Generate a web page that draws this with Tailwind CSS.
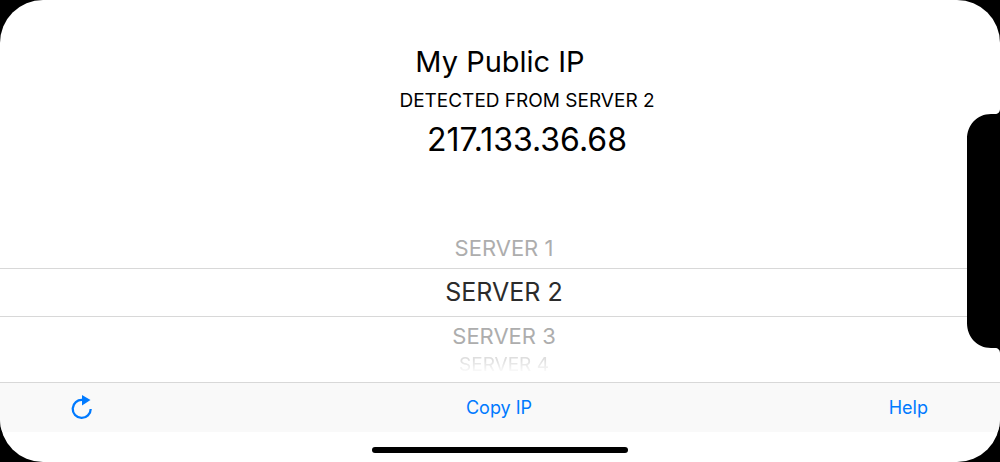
<!DOCTYPE html>
<html lang="en">
<head>
  <meta charset="UTF-8" />
  <meta name="viewport" content="width=device-width, initial-scale=1.0" />
  <title>My Public IP</title>
  <script src="https://cdn.jsdelivr.net/npm/@tailwindcss/browser@4"></script>
</head>
<body class="bg-black font-['Inter',sans-serif]">
  <div class="relative flex min-h-screen flex-col overflow-hidden rounded-[43px] bg-white">
    <header class="flex flex-col items-center pt-10 text-black">
      <h1 class="text-[29px] leading-[44px]">My Public IP</h1>
      <p class="pl-[54px] text-[19px] leading-[34px]">DETECTED FROM SERVER 2</p>
      <p id="ip" class="pl-[54px] text-[32px] leading-[44px]">217.133.36.68</p>
    </header>

    <!-- server picker -->
    <div role="radiogroup" aria-label="Server" class="mt-auto flex h-[153px] flex-col text-center text-[22px] text-[#adadad]">
      <label class="flex h-[39px] items-center justify-center pl-2">
        <input type="radio" name="server" value="1" class="appearance-none" />SERVER 1
      </label>
      <label class="flex h-[49px] items-center justify-center border-y border-[#d8d8d8] pl-2 text-[25px] text-[#2b2b2b]">
        <input type="radio" name="server" value="2" class="appearance-none" checked />SERVER 2
      </label>
      <label class="flex h-[39px] items-center justify-center pl-2">
        <input type="radio" name="server" value="3" class="appearance-none" />SERVER 3
      </label>
      <label class="flex h-[18px] items-center justify-center pl-2 text-[19px] text-[#dedede] mask-b-from-20%">
        <input type="radio" name="server" value="4" class="appearance-none" />SERVER 4
      </label>
    </div>

    <footer class="grid h-[50px] grid-cols-3 items-center border-t border-[#d8d8d8] bg-[#f9f9f9] pl-[70px] pr-[72px] text-[18px] text-[#007aff]">
      <button type="button" aria-label="Refresh" class="justify-self-start">
        <svg class="block h-7 w-6" viewBox="0 0 24 28" fill="none">
          <path d="M12.500 6A9 9 0 1 0 20.700 15" stroke="currentColor" stroke-width="2.300" />
          <path d="M12 1v10.500l8.500-5.500z" fill="currentColor" />
        </svg>
      </button>
      <button type="button" id="copy" class="justify-self-center">Copy IP</button>
      <button type="button" class="justify-self-end">Help</button>
    </footer>

    <div class="flex h-[30px] items-center justify-center pt-1.5">
      <div class="h-1.5 w-64 rounded-full bg-black"></div>
    </div>

    <!-- notch -->
    <svg class="absolute right-0 top-1/2 h-[244px] w-[34px] -translate-y-1/2" viewBox="0 0 34 244">
      <path d="M34 0c0 3-2 5-5 5h-4C11 5 1 16 1 30v184c0 14 10 25 24 25h4c3 0 5 2 5 5z" fill="#000" />
    </svg>
  </div>

  <script>
    document.getElementById('copy').addEventListener('click', () => {
      navigator.clipboard.writeText(document.getElementById('ip').textContent);
    });
  </script>
</body>
</html>
